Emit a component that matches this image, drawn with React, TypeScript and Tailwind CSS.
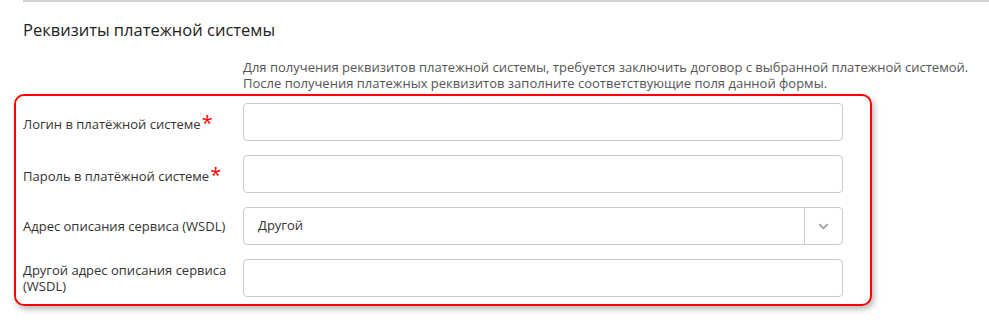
import { ChevronDown } from "lucide-react";

const FONT = { fontFamily: '"Open Sans", "Noto Sans", Arial, sans-serif' };

function Label({ text, required }: { text: string; required?: boolean }) {
  return (
    <div className="w-[220px] shrink-0 text-[13px] leading-[16px] text-[#333]">
      {text}
      {required && (
        <span className="relative top-[1px] ml-px text-[20px] leading-none text-[#f00]">*</span>
      )}
    </div>
  );
}

function TextInput() {
  return <div className="h-[38px] w-[600px] rounded-[4px] border border-[#ccc] bg-white" />;
}

export default function App() {
  return (
    <div className="h-[328px] w-[989px] overflow-hidden bg-white" style={FONT}>
      <div className="ml-[23px] h-[2px] bg-[#cfcfcf]" />

      <h2 className="ml-[23px] mt-[17px] text-[16.5px] leading-[22px] text-[#222]">
        Реквизиты платежной системы
      </h2>

      <div className="ml-[243px] mt-[18px] text-[13px] leading-[16px] text-[#555]">
        <p>Для получения реквизитов платежной системы, требуется заключить договор с выбранной платежной системой.</p>
        <p>После получения платежных реквизитов заполните соответствующие поля данной формы.</p>
      </div>

      <div className="ml-[14px] mt-[3px] flex w-[858px] flex-col gap-[14px] rounded-[10px] border-2 border-[#f00] py-[7px] pl-[7px] shadow-[2px_3px_6px_rgba(0,0,0,0.3)]">
        <div className="flex items-center">
          <Label text="Логин в платёжной системе" required />
          <TextInput />
        </div>
        <div className="flex items-center">
          <Label text="Пароль в платёжной системе" required />
          <TextInput />
        </div>
        <div className="flex items-center">
          <Label text="Адрес описания сервиса (WSDL)" />
          <div className="flex h-[38px] w-[600px] items-center rounded-[4px] border border-[#ccc] bg-white">
            <span className="flex-1 pl-[14px] text-[13px] text-[#333]">Другой</span>
            <div className="flex h-full w-[38px] items-center justify-center border-l border-[#ccc]">
              <ChevronDown size={15} strokeWidth={2.5} className="text-[#999]" />
            </div>
          </div>
        </div>
        <div className="flex items-center">
          <Label text="Другой адрес описания сервиса (WSDL)" />
          <TextInput />
        </div>
      </div>
    </div>
  );
}
